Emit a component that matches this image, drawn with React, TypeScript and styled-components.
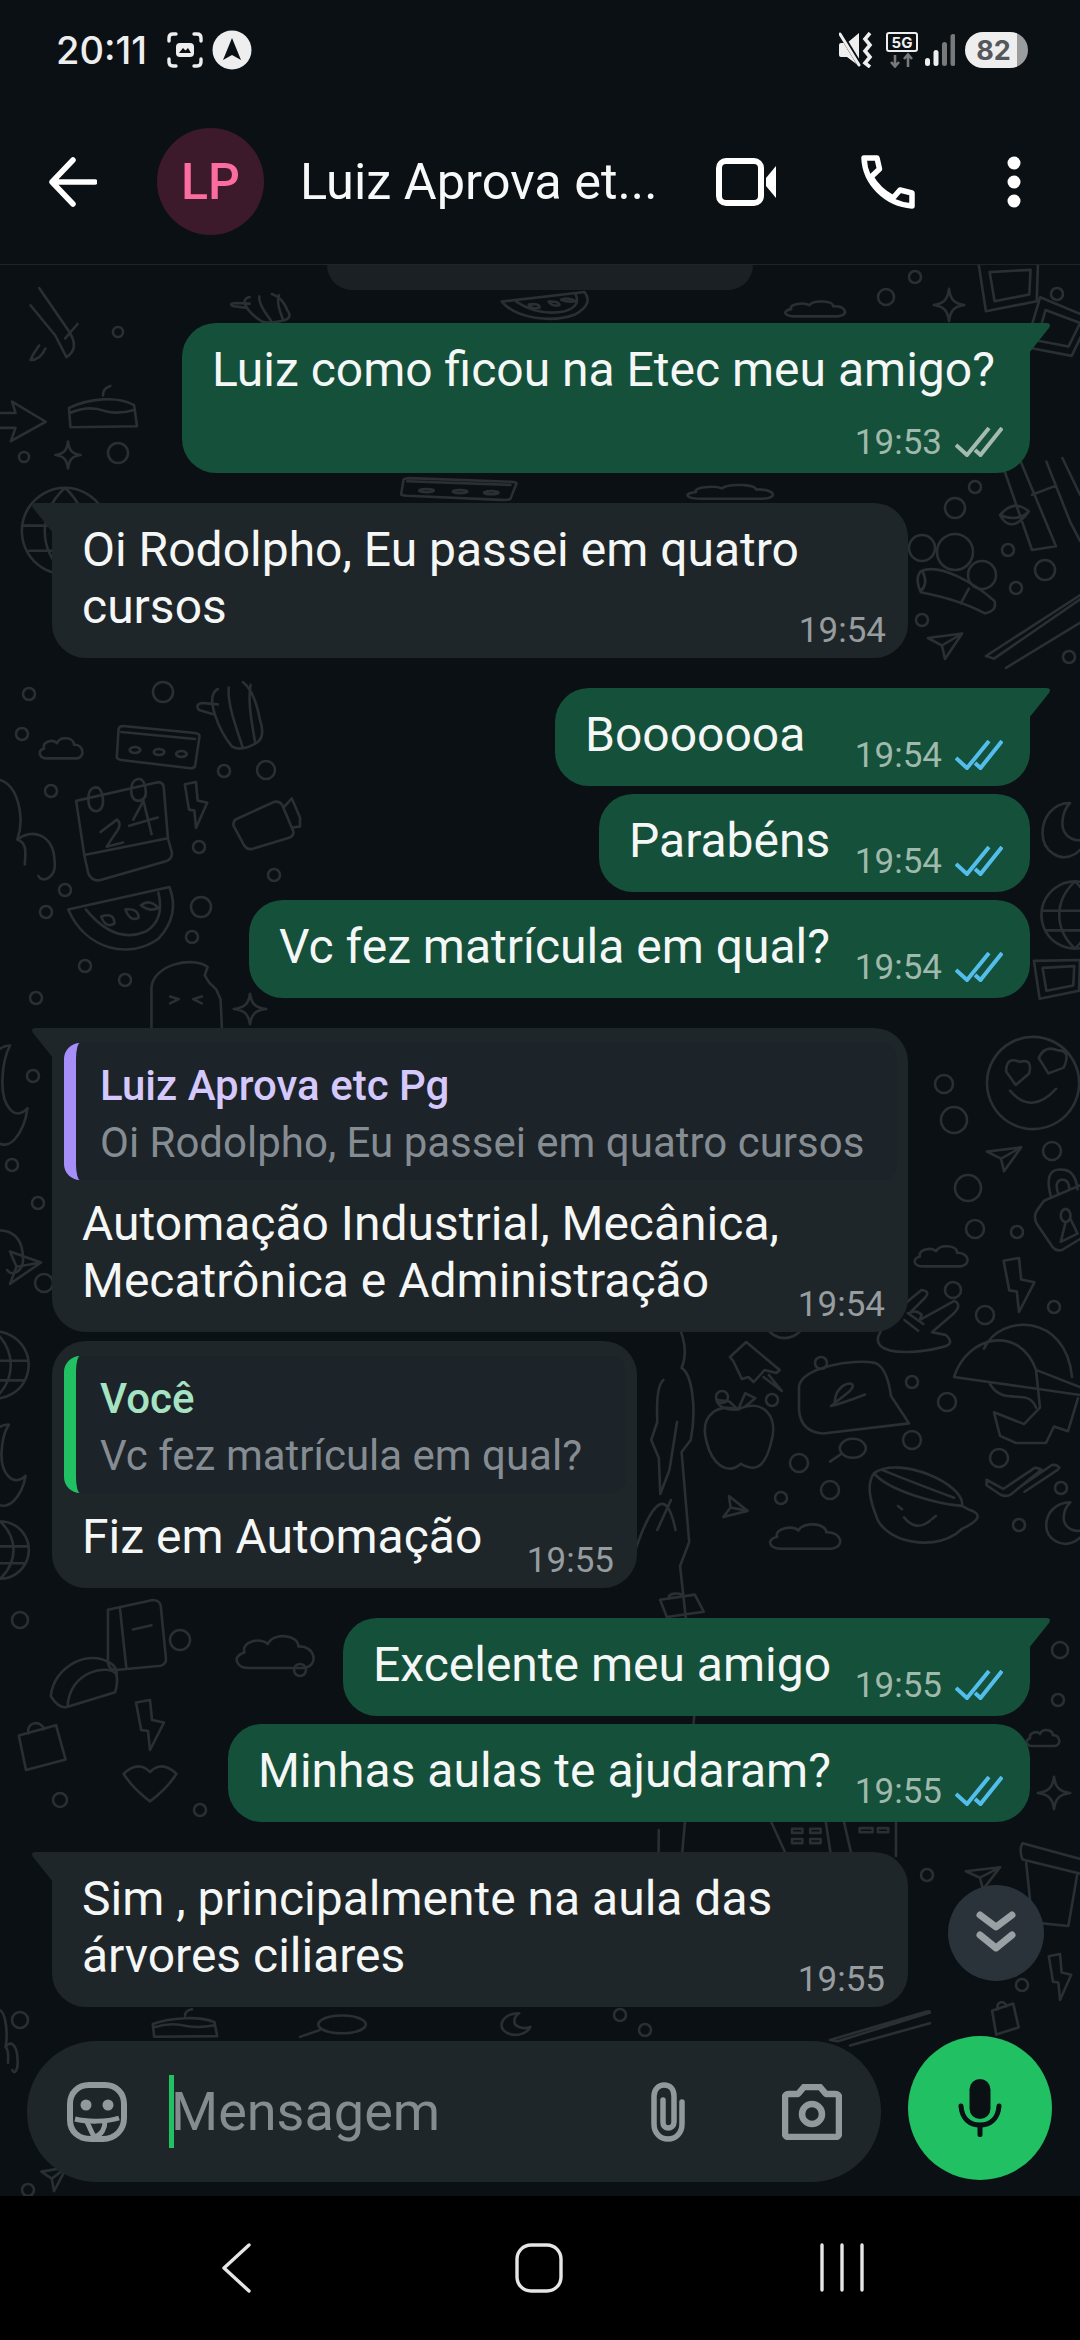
import React from 'react'
import styled, { createGlobalStyle, css } from 'styled-components'

const GlobalStyle = createGlobalStyle`
  html, body {
    margin: 0;
    background: #0b1014;
  }
  * {
    box-sizing: border-box;
  }
`

const Screen = styled.div`
  width: 1080px;
  height: 2340px;
  display: flex;
  flex-direction: column;
  overflow: hidden;
  background: #0b1014;
  font-family: Roboto, 'Liberation Sans', sans-serif;
  color: #fff;
`

const StatusBar = styled.div`
  height: 100px;
  flex: none;
  display: flex;
  align-items: center;
  justify-content: space-between;
  padding: 0 52px 0 56px;
`

const StatusGroup = styled.div`
  display: flex;
  align-items: center;
`

const Clock = styled.span`
  font-family: Inter, Roboto, sans-serif;
  font-size: 38px;
  font-weight: 500;
  color: #eeeeee;
  margin-right: 20px;
`

const BatteryPill = styled.div`
  width: 63px;
  height: 36px;
  margin-left: 10px;
  border-radius: 18px;
  display: flex;
  align-items: center;
  justify-content: center;
  padding-right: 6px;
  font-family: Inter, Roboto, sans-serif;
  font-size: 27px;
  font-weight: 700;
  color: #55585b;
  background: linear-gradient(90deg, #eeeeee 82%, #9a9c9e 82%);
`

const Header = styled.header`
  height: 165px;
  flex: none;
  display: flex;
  align-items: center;
  padding: 0 59px 1px 49px;
  border-bottom: 1px solid #1f2427;
`

const Avatar = styled.div`
  width: 107px;
  height: 107px;
  margin-left: 60px;
  border-radius: 50%;
  flex: none;
  display: flex;
  align-items: center;
  justify-content: center;
  background: #3d1a2b;
  color: #fb6c9f;
  font-size: 50px;
  font-weight: 500;
`

const ContactName = styled.div`
  flex: 1;
  margin-left: 36px;
  font-size: 50.5px;
  white-space: nowrap;
  color: #f7f8f8;
`

const HeaderIcon = styled.svg<{ $gap?: number }>`
  flex: none;
  display: block;
  margin-left: ${(p) => p.$gap ?? 0}px;
`

const Chat = styled.main`
  position: relative;
  flex: 1;
  min-height: 0;
  display: flex;
  flex-direction: column;
  overflow: hidden;
`

const Wallpaper = styled.svg`
  position: absolute;
  inset: 0;
  width: 100%;
  height: 100%;
  fill: none;
  stroke: #2a2f33;
  stroke-width: 2.6;
  stroke-linecap: round;
  stroke-linejoin: round;
`

const Messages = styled.div`
  position: relative;
  flex: 1;
  min-height: 0;
  display: flex;
  flex-direction: column;
  align-items: flex-start;
`

const CutBubble = styled.div`
  width: 426px;
  height: 25px;
  margin-left: 327px;
  border-radius: 0 0 34px 34px;
  background: #1a2023;
`

const tailOut = css`
  border-top-right-radius: 0;
  &::after {
    content: '';
    position: absolute;
    top: 0;
    right: -21px;
    width: 22px;
    height: 30px;
    background: inherit;
    clip-path: path('M0 0 H17 Q23 0 20 5 L0 30 Z');
  }
`

const tailIn = css`
  border-top-left-radius: 0;
  &::after {
    content: '';
    position: absolute;
    top: 0;
    left: -21px;
    width: 22px;
    height: 30px;
    background: inherit;
    clip-path: path('M22 0 H5 Q-1 0 2 5 L22 30 Z');
  }
`

const Bubble = styled.div<{ $out?: boolean; $tail?: boolean; $w: number; $gap: number }>`
  position: relative;
  width: ${(p) => p.$w}px;
  margin-top: ${(p) => p.$gap}px;
  margin-left: ${(p) => (p.$out ? 1030 - p.$w : 52)}px;
  border-radius: 34px;
  background: ${(p) => (p.$out ? '#15503a' : '#1f2629')};
  ${(p) => p.$tail && (p.$out ? tailOut : tailIn)}
`

const QuoteBox = styled.div<{ $accent: string }>`
  margin: 15px 11px 0 12px;
  height: 137px;
  padding: 14px 0 0 24px;
  border-left: 12px solid ${(p) => p.$accent};
  border-radius: 16px;
  background: #1c2329;
`

const QuoteTitle = styled.div<{ $color: string }>`
  font-size: 42px;
  line-height: 57px;
  font-weight: 500;
  color: ${(p) => p.$color};
`

const QuoteText = styled.div`
  font-size: 42px;
  line-height: 57px;
  white-space: nowrap;
  color: #858c92;
`

const Row = styled.div<{ $out?: boolean; $stack?: boolean; $quoted?: boolean }>`
  display: flex;
  flex-direction: ${(p) => (p.$stack ? 'column' : 'row')};
  justify-content: space-between;
  align-items: ${(p) => (p.$stack ? 'stretch' : 'flex-end')};
  padding: ${(p) => (p.$quoted ? 15 : 18)}px ${(p) => (p.$out ? 27 : 23)}px ${(p) => (p.$out ? 11 : 8)}px 30px;
`

const MessageText = styled.div<{ $out?: boolean; $stack?: boolean }>`
  font-size: 48px;
  line-height: 57px;
  white-space: nowrap;
  color: #f4f7f6;
  margin-bottom: ${(p) => (p.$stack ? 24 : p.$out ? 12 : 15)}px;
`

const Meta = styled.div<{ $out?: boolean }>`
  height: 40px;
  display: flex;
  align-items: center;
  justify-content: flex-end;
  gap: 13px;
  font-size: 35px;
  color: ${(p) => (p.$out ? '#9fb9ac' : '#979c9f')};
`

const ScrollButton = styled.div`
  position: absolute;
  right: 36px;
  bottom: 215px;
  width: 96px;
  height: 96px;
  border-radius: 50%;
  display: flex;
  align-items: center;
  justify-content: center;
  background: #2a3339;
`

const ComposerRow = styled.div`
  position: relative;
  height: 160px;
  flex: none;
  display: flex;
  align-items: flex-start;
  padding-left: 27px;
  gap: 27px;
`

const InputPill = styled.div`
  width: 854px;
  height: 141px;
  margin-top: 5px;
  border-radius: 70px;
  display: flex;
  align-items: center;
  padding-left: 40px;
  background: #1f2629;
`

const Caret = styled.div`
  width: 5px;
  height: 73px;
  margin-left: 42px;
  background: #21c063;
`

const Placeholder = styled.div`
  flex: 1;
  margin-left: -3px;
  font-size: 54px;
  color: #858c90;
`

const PillIcon = styled.svg<{ $right: number }>`
  flex: none;
  display: block;
  margin-right: ${(p) => p.$right}px;
  fill: none;
  stroke: #92999d;
`

const MicButton = styled.div`
  width: 144px;
  height: 144px;
  border-radius: 50%;
  flex: none;
  display: flex;
  align-items: center;
  justify-content: center;
  background: #21c063;
`

const NavBar = styled.nav`
  height: 144px;
  flex: none;
  display: flex;
  align-items: flex-start;
  padding: 47px 0 0 221px;
  background: #000;
`

const NavIcon = styled.svg<{ $gap?: number }>`
  display: block;
  margin-left: ${(p) => p.$gap ?? 0}px;
  fill: none;
  stroke: #e6e6e6;
  stroke-width: 3.4;
  stroke-linecap: round;
  stroke-linejoin: round;
`

// wallpaper doodles, each drawn in a 100x100 box
const shapes: Record<string, string> = {
  cloud: 'M22 80C6 80 2 60 16 54C12 36 34 28 42 40C48 20 76 24 76 44C94 42 100 76 82 80Z',
  sparkle: 'M50 5C54 35 65 46 95 50C65 54 54 65 50 95C46 65 35 54 5 50C35 46 46 35 50 5Z',
  plane: 'M5 20L95 5L50 90L42 45ZM42 45L95 5',
  bolt: 'M15 5L50 0L55 40L85 45L50 100L45 62L28 60Z',
  moon: 'M60 5C25 5 5 30 5 55C5 85 40 105 70 90C85 82 92 72 95 62C70 75 42 60 45 35C46 22 52 12 60 5Z',
  ticket: 'M8 8L92 22Q98 24 97 30L92 88Q90 94 84 92L6 76Q0 74 1 68L3 14Q4 8 8 8ZM6 20L92 34M22 50a6 6 0 1 0 .1 0M50 54a6 6 0 1 0 .1 0M76 58a6 6 0 1 0 .1 0',
  calendar: 'M6 22L86 4Q92 4 92 10L96 58L100 72Q100 78 94 80L30 98Q22 100 18 92L14 74ZM14 74L96 58M22 10Q30 6 32 18Q34 30 26 32Q18 32 18 20Q18 12 22 10ZM64 2Q72 -2 74 10Q76 20 68 22Q60 22 60 12Q60 4 64 2ZM30 52L46 40Q52 44 44 54L36 66L52 62M62 40L72 22L80 54M58 46L86 38',
  camera: 'M6 45L62 14Q70 12 74 20L90 66Q92 74 84 78L30 98Q22 100 18 92L2 56Q2 48 6 45ZM76 24L88 8L100 42L100 58L88 60',
  cactus: 'M28 10C10 20 30 70 46 92Q56 100 76 88Q90 80 82 54C78 30 72 10 60 0M42 8C40 30 50 60 60 94M70 4C66 30 72 60 76 88M22 46L4 40M4 40Q-2 32 8 30L28 32',
  melon: 'M2 32L94 0Q104 40 84 74C58 104 18 90 2 32ZM18 32Q44 82 72 64Q90 48 84 8M54 32Q66 30 66 44Q58 50 54 32ZM32 42Q44 36 44 52Q36 60 32 42ZM68 26Q76 16 84 30Q76 36 68 26Z',
  popsicle: 'M2 100L2 40C4 6 60 -6 80 10L76 22L82 32L92 42L98 56L100 100ZM28 62L40 56L28 52M72 62L60 56L72 52',
  broccoli: 'M0 0C30 6 40 40 28 62C50 50 86 56 88 84C92 102 68 108 62 100M28 62C46 66 40 80 40 88',
  smiley: 'M50 2A48 48 0 1 0 50.1 2ZM26 58Q48 84 74 56M22 38Q22 22 36 28Q50 24 46 40L32 52ZM56 24Q62 10 76 16Q90 16 82 34L66 40Z',
  lock: 'M20 40L90 18Q100 18 100 30L100 70Q100 78 90 82L50 100Q40 102 34 96L8 68Q2 60 8 52ZM32 36Q18 0 50 2Q72 2 76 26M44 32Q36 16 50 14Q62 14 62 26M56 50a8 8 0 1 0 .1 0M56 66L48 90L76 80L64 62',
  hand: 'M12 62C20 40 52 8 60 0Q72 2 62 14L46 34Q52 28 60 36L58 44L98 16Q108 22 96 36L72 62L88 66Q100 80 84 84C60 92 24 96 12 82Q6 74 12 62ZM40 44L56 60M44 34L62 50',
  pin: 'M30 0L92 56L86 62L64 56L44 80L34 70L22 74L6 38L0 30ZM62 70L96 98L72 66',
  speech: 'M6 36C10 10 60 -2 82 4Q94 10 98 50L116 88L30 102Q8 100 6 70ZM42 62C40 28 70 26 56 44L38 64Q50 60 72 48',
  apple: 'M50 24L60 4L74 10L60 20M50 24C80 10 108 28 96 64C86 100 70 98 54 90C36 104 14 92 6 62C-4 28 26 16 50 24ZM50 24L38 14L20 12Q24 24 46 24',
  cup: 'M4 16C30 -6 96 30 92 56L98 60Q120 68 92 84L86 90C60 110 20 100 8 74C0 50 -4 30 4 16ZM4 16C18 38 70 54 92 56M12 12Q40 26 84 46M32 60L28 56M62 72L66 68M34 70Q46 88 60 74',
  check: 'M2 56L24 76L62 34Q66 26 74 34L34 88Q28 94 20 88L2 68ZM52 82L96 34M44 74L88 24Q94 22 98 30',
  pot: 'M4 8L100 26Q104 34 98 42L4 26Q-2 16 4 8ZM10 30L20 96L78 100L92 44',
  taco: 'M4 70C8 24 60 -4 92 22Q100 30 98 38C90 20 30 30 28 86Q16 90 4 70ZM28 86L96 64Q100 50 98 38',
  notebook: 'M12 14L80 0Q90 0 92 8L100 84Q100 92 92 94L24 100Q14 100 12 90ZM30 10L40 98M50 42L78 36',
  chopstick: 'M0 100L96 6Q100 2 100 8L8 104ZM20 118L100 44',
  sushi: 'M6 10C30 -4 74 30 98 58Q102 74 86 78C60 60 30 50 6 44Q-2 22 6 10ZM8 10Q16 30 6 42M66 38L56 62',
  bamboo: 'M0 0L40 100M24 0L70 96L40 100M40 40L70 30M58 4L88 70L100 90M78 0L100 40M36 58Q18 44 0 62Q22 70 36 58ZM0 62Q14 84 36 58',
  frame: 'M4 2L100 0L98 70L16 88ZM22 18L88 14L86 58L30 70Z',
  buildings: 'M4 0L16 100M46 0L50 100M60 0L66 100M100 0L100 100M20 20h8v12h-8zM34 20h8v12h-8zM72 18h10v12h-10zM86 18h8v12h-8zM20 50h8v12h-8zM34 50h8v12h-8z',
  girl: 'M42 0C60 0 70 10 60 16C74 18 80 30 72 40L60 44L70 74L58 82L78 128L60 180L64 220M36 20Q26 22 28 34L20 40L30 46L32 58L44 50L54 34M28 70L46 60M0 76Q36 50 52 70M0 150Q40 170 70 138M30 170L28 220',
  cap: 'M4 44C18 8 70 0 86 38L134 54L136 60L4 44ZM34 20C50 -10 116 -10 122 44M86 38L90 70L74 84L44 74L50 94L66 100L96 100L104 86L118 90L128 62M40 50C54 70 78 52 86 70',
  rocket: 'M18 0L66 60Q84 84 62 96L44 66L4 24M60 70L80 50M18 80Q8 92 4 100Q20 100 28 84',
  arrow: 'M0 34L44 34L38 8L96 54L36 98L44 68L0 68',
  cake: 'M6 90L4 50C30 30 70 24 92 44L96 88ZM6 60Q30 44 52 56Q70 64 92 54M50 24Q50 8 60 4',
  globe: 'M50 2A48 48 0 1 0 50.1 2ZM50 2C20 30 20 70 50 98C80 70 80 30 50 2ZM4 44L96 44M10 72L90 72',
  bag: 'M18 30L80 10L96 76L30 96ZM34 26C30 2 56 0 60 18',
  mag: 'M60 6A34 34 0 1 0 60.1 6ZM28 62L0 88',
  rings: 'M6 30Q30 0 50 26Q70 0 94 30Q80 60 50 90Q20 60 6 30Z',
}

type Doodle = [string, number, number, number, number?, number?]

// [shape, x, y, width, height, rotation], page coordinates
const doodles: Doodle[] = [
  ['rocket', 28, 288, 62, 72],
  ['arrow', -10, 398, 58, 44],
  ['cake', 66, 384, 74, 48],
  ['sparkle', 54, 440, 28, 30],
  ['globe', 20, 486, 90, 90],
  ['sushi', 916, 565, 80, 62],
  ['frame', 976, 262, 62, 56],
  ['frame', 1024, 304, 56, 60, 24],
  ['sparkle', 932, 287, 34, 36],
  ['bamboo', 1000, 458, 80, 92],
  ['chopstick', 986, 590, 100, 66],
  ['plane', 926, 632, 38, 30],
  ['cactus', 196, 682, 78, 70],
  ['cloud', 36, 728, 50, 38],
  ['ticket', 116, 722, 86, 50],
  ['calendar', 70, 778, 102, 104],
  ['bolt', 180, 782, 32, 46],
  ['camera', 232, 794, 68, 56],
  ['broccoli', 0, 780, 62, 96],
  ['melon', 66, 887, 110, 70],
  ['popsicle', 150, 960, 72, 70],
  ['sparkle', 232, 992, 36, 34],
  ['cloud', 954, 740, 60, 44],
  ['frame', 1032, 960, 48, 44],
  ['moon', 1040, 800, 50, 60],
  ['globe', 1040, 880, 70, 70],
  ['smiley', 985, 1035, 96, 96],
  ['plane', 985, 1146, 38, 28],
  ['lock', 1032, 1168, 60, 82],
  ['cloud', 910, 1236, 62, 38],
  ['bolt', 997, 1258, 44, 54],
  ['hand', 870, 1290, 86, 68],
  ['moon', 764, 1300, 42, 40],
  ['pin', 730, 1342, 54, 50],
  ['speech', 793, 1360, 100, 72],
  ['cap', 950, 1325, 100, 118],
  ['apple', 702, 1390, 72, 82],
  ['girl', 636, 1320, 76, 300],
  ['mag', 830, 1437, 38, 28],
  ['cup', 870, 1460, 100, 82],
  ['check', 985, 1454, 76, 46],
  ['plane', 718, 1497, 26, 26, 48],
  ['cloud', 764, 1512, 82, 46],
  ['moon', 1044, 1500, 44, 46],
  ['moon', -20, 1040, 50, 110],
  ['broccoli', -30, 1180, 60, 90],
  ['plane', 0, 1250, 36, 40, 30],
  ['globe', -40, 1330, 70, 70],
  ['moon', -20, 1420, 48, 90],
  ['globe', -30, 1520, 60, 60],
  ['taco', 48, 1650, 70, 66],
  ['notebook', 100, 1600, 66, 70],
  ['cloud', 230, 1620, 90, 60],
  ['bolt', 130, 1700, 40, 50],
  ['bag', 8, 1720, 60, 52],
  ['rings', 120, 1760, 60, 46],
  ['cloud', 1024, 1722, 38, 30],
  ['sparkle', 1036, 1775, 36, 36],
  ['pot', 1020, 1836, 62, 90],
  ['plane', 964, 1866, 38, 26],
  ['buildings', 766, 1822, 130, 34],
  ['bolt', 1044, 1954, 32, 46],
  ['bag', 986, 2000, 34, 36],
  ['moon', 500, 2012, 32, 24],
  ['mag', 300, 2014, 70, 26],
  ['cake', 150, 2008, 70, 32],
  ['broccoli', 0, 2010, 20, 60],
  ['chopstick', 830, 2010, 100, 30],
  ['plane', 40, 2166, 28, 28],
  ['cloud', 680, 478, 100, 26],
  ['ticket', 400, 476, 120, 26],
  ['cactus', 230, 294, 70, 30],
  ['melon', 500, 292, 90, 30],
  ['cloud', 780, 294, 70, 28],
  ['bag', 650, 1592, 56, 26],
]

// [x, y, r]
const dots: [number, number, number][] = [
  [118, 332, 5], [24, 457, 5], [118, 453, 10], [975, 487, 6], [955, 508, 10], [922, 548, 13],
  [955, 552, 18], [982, 575, 14], [1008, 550, 6], [1045, 570, 10], [1016, 588, 6], [922, 620, 6],
  [1069, 657, 6], [915, 277, 6], [886, 297, 8], [1057, 294, 6], [29, 694, 6], [22, 734, 6],
  [163, 692, 10], [51, 791, 6], [224, 771, 6], [266, 770, 9], [65, 890, 6], [46, 912, 6],
  [199, 847, 6], [274, 875, 6], [201, 907, 10], [192, 937, 6], [85, 966, 6], [125, 980, 6],
  [36, 998, 6], [33, 1076, 6], [12, 1165, 6], [38, 1203, 6], [44, 1283, 9], [944, 1084, 9],
  [954, 1120, 13], [1052, 1151, 9], [968, 1188, 13], [975, 1229, 9], [1017, 1232, 6], [953, 1290, 8],
  [985, 1315, 9], [1054, 1307, 6], [845, 1318, 9], [821, 1363, 6], [912, 1382, 6], [947, 1402, 9],
  [772, 1400, 6], [722, 1397, 6], [912, 1440, 9], [999, 1458, 9], [799, 1463, 9], [830, 1490, 9],
  [781, 1498, 6], [1061, 1488, 6], [1019, 1525, 6], [927, 1875, 6], [1022, 1985, 6], [1060, 1650, 8],
  [1058, 1700, 6], [20, 1620, 8], [180, 1640, 10], [300, 1670, 6], [60, 1800, 7], [200, 1810, 6],
  [20, 2020, 8], [620, 2015, 6], [645, 2030, 6], [28, 2190, 6],
]

const ChatWallpaper = () => (
  <Wallpaper viewBox="0 265 1080 1931">
    {doodles.map(([name, x, y, w, h = w, rot = 0], i) => (
      <path
        key={i}
        d={shapes[name]}
        vectorEffect="non-scaling-stroke"
        transform={`translate(${x} ${y}) rotate(${rot} ${w / 2} ${h / 2}) scale(${w / 100} ${h / 100})`}
      />
    ))}
    {dots.map(([cx, cy, r], i) => (
      <circle key={i} cx={cx} cy={cy} r={r} />
    ))}
  </Wallpaper>
)

const Ticks = ({ read }: { read?: boolean }) => (
  <svg width="48" height="30" viewBox="0 0 48 30" fill="none" stroke={read ? '#53bdeb' : '#a4bbaf'} strokeWidth="4">
    <path d="M1 18L12 28L34 1" />
    <path d="M20 23L25.5 28L47 1" />
  </svg>
)

type QuoteData = { accent: string; titleColor: string; title: string; text: string }

type MessageProps = {
  out?: boolean
  tail?: boolean
  read?: boolean
  stack?: boolean
  w: number
  gap: number
  time: string
  quote?: QuoteData
  children: React.ReactNode
}

const Message = ({ out, tail, read, stack, w, gap, time, quote, children }: MessageProps) => (
  <Bubble $out={out} $tail={tail} $w={w} $gap={gap}>
    {quote && (
      <QuoteBox $accent={quote.accent}>
        <QuoteTitle $color={quote.titleColor}>{quote.title}</QuoteTitle>
        <QuoteText>{quote.text}</QuoteText>
      </QuoteBox>
    )}
    <Row $out={out} $stack={stack} $quoted={!!quote}>
      <MessageText $out={out} $stack={stack}>{children}</MessageText>
      <Meta $out={out}>
        {time}
        {out && <Ticks read={read} />}
      </Meta>
    </Row>
  </Bubble>
)

const App = () => (
  <Screen>
    <GlobalStyle />
    <StatusBar>
      <StatusGroup>
        <Clock>20:11</Clock>
        <svg width="36" height="36" viewBox="0 0 36 36" fill="none" stroke="#eee" strokeWidth="3.4" strokeLinecap="round">
          <path d="M2 9V6Q2 2 6 2H9M27 2H30Q34 2 34 6V9M34 27V30Q34 34 30 34H27M9 34H6Q2 34 2 30V27" />
          <rect x="9" y="11" width="18" height="14" rx="4" fill="#eee" stroke="none" />
          <path d="M12 21L16 16L18.500 18.500L21 16L24 21Z" fill="#0b1014" stroke="none" />
        </svg>
        <svg width="40" height="40" viewBox="0 0 40 40" style={{ marginLeft: 9 }}>
          <circle cx="20" cy="20" r="19.500" fill="#eee" />
          <path d="M20 8L29 30L20 25L11 30Z" fill="#0b1014" />
        </svg>
      </StatusGroup>
      <StatusGroup>
        <svg width="35" height="36" viewBox="0 0 35 36">
          <path d="M0 13Q0 11 2 11H8L20 1V34L8 25H2Q0 25 0 23Z" fill="#eee" />
          <path d="M2 2L21 33" stroke="#0b1014" strokeWidth="5" />
          <path d="M1 2L20 33" stroke="#eee" strokeWidth="3" strokeLinecap="round" />
          <path d="M31 1L26 7L31 13L26 19L31 25L26 31L31 35" fill="none" stroke="#eee" strokeWidth="3.6" />
        </svg>
        <svg width="32" height="36" viewBox="0 0 32 36" style={{ marginLeft: 12 }}>
          <rect x="1" y="1" width="30" height="18" rx="2" fill="none" stroke="#eee" strokeWidth="2" />
          <text x="16" y="16" textAnchor="middle" fontFamily="Inter, sans-serif" fontSize="15" fontWeight="700" fill="#eee">5G</text>
          <path d="M9 23V34M5 30L9 34.500L13 30M22 35V23M18 27L22 22.500L26 27" fill="none" stroke="#77797b" strokeWidth="2.6" />
        </svg>
        <svg width="30" height="34" viewBox="0 0 30 34" style={{ marginLeft: 7 }}>
          <rect x="0" y="25" width="5" height="8" rx="2.500" fill="#eee" />
          <rect x="8.500" y="17" width="5" height="16" rx="2.500" fill="#eee" />
          <rect x="17" y="9" width="5" height="24" rx="2.500" fill="#77797b" />
          <rect x="25.500" y="1" width="5" height="32" rx="2.500" fill="#77797b" />
        </svg>
        <BatteryPill>82</BatteryPill>
      </StatusGroup>
    </StatusBar>

    <Header>
      <HeaderIcon width="48" height="50" viewBox="0 0 48 50" fill="none" stroke="#fff" strokeWidth="5.500" strokeLinecap="round" strokeLinejoin="round">
        <path d="M46 25H5M24 3L3 25L24 47" />
      </HeaderIcon>
      <Avatar>LP</Avatar>
      <ContactName>Luiz Aprova et...</ContactName>
      <HeaderIcon width="60" height="48" viewBox="0 0 60 48">
        <rect x="3" y="3" width="42" height="42" rx="7" fill="none" stroke="#fff" strokeWidth="6" />
        <path d="M50 20L60 8V40L50 28Z" fill="#fff" />
      </HeaderIcon>
      <HeaderIcon $gap={84} width="56" height="56" viewBox="20 24 56 56" fill="none" stroke="#fff" strokeWidth="5.500" strokeLinejoin="round">
        <path d="M24 28L37 28L39.500 39L31 47C36 56 44 63 53 68L60 60L72 63L72 76C46 74 25 53 24 28Z" />
      </HeaderIcon>
      <HeaderIcon $gap={91} width="14" height="52" viewBox="0 0 14 52" fill="#fff">
        <circle cx="7" cy="7" r="6.500" />
        <circle cx="7" cy="26" r="6.500" />
        <circle cx="7" cy="45" r="6.500" />
      </HeaderIcon>
    </Header>

    <Chat>
      <ChatWallpaper />
      <Messages>
        <CutBubble />
        <Message out tail stack w={848} gap={33} time="19:53">
          Luiz como ficou na Etec meu amigo?
        </Message>
        <Message tail w={856} gap={30} time="19:54">
          Oi Rodolpho, Eu passei em quatro
          <br />
          cursos
        </Message>
        <Message out tail read w={475} gap={30} time="19:54">
          Booooooa
        </Message>
        <Message out read w={431} gap={8} time="19:54">
          Parabéns
        </Message>
        <Message out read w={781} gap={8} time="19:54">
          Vc fez matrícula em qual?
        </Message>
        <Message
          tail
          w={856}
          gap={30}
          time="19:54"
          quote={{ accent: '#a78ffa', titleColor: '#d4c8fc', title: 'Luiz Aprova etc Pg', text: 'Oi Rodolpho, Eu passei em quatro cursos' }}
        >
          Automação Industrial, Mecânica,
          <br />
          Mecatrônica e Administração
        </Message>
        <Message
          w={585}
          gap={9}
          time="19:55"
          quote={{ accent: '#21c063', titleColor: '#a5e3c3', title: 'Você', text: 'Vc fez matrícula em qual?' }}
        >
          Fiz em Automação
        </Message>
        <Message out tail read w={687} gap={30} time="19:55">
          Excelente meu amigo
        </Message>
        <Message out read w={802} gap={8} time="19:55">
          Minhas aulas te ajudaram?
        </Message>
        <Message tail w={856} gap={30} time="19:55">
          Sim , principalmente na aula das
          <br />
          árvores ciliares
        </Message>
      </Messages>

      <ScrollButton>
        <svg width="40" height="44" viewBox="0 0 40 44" fill="none" stroke="#9aa1a5" strokeWidth="7" strokeLinecap="round" strokeLinejoin="round">
          <path d="M4 4L20 16L36 4M4 24L20 37L36 24" />
        </svg>
      </ScrollButton>

      <ComposerRow>
        <InputPill>
          <PillIcon $right={0} width="60" height="60" viewBox="0 0 60 60" strokeWidth="6">
            <path d="M22 3H38C49 3 57 11 57 22V36C57 48 48 57 36 57H24C11 57 3 49 3 38V22C3 11 11 3 22 3Z" />
            <circle cx="19" cy="23" r="5.500" fill="#92999d" stroke="none" />
            <circle cx="41" cy="23" r="5.500" fill="#92999d" stroke="none" />
            <path d="M8 37C20 40 40 40 52 36" strokeWidth="5" />
            <path d="M20 40L27 55C35 53 38 46 38 39" strokeWidth="5" strokeLinejoin="round" />
          </PillIcon>
          <Caret />
          <Placeholder>Mensagem</Placeholder>
          <PillIcon $right={95} width="38" height="60" viewBox="0 0 38 60" strokeWidth="5.500" strokeLinecap="round">
            <path d="M33 20V42C33 51 27 57 19 57C11 57 5 51 5 42V14C5 7 10 3 15 3C21 3 25 7 25 14V40C25 44 22 46 19 46C16 46 14 44 14 40V18" />
          </PillIcon>
          <PillIcon $right={39} width="60" height="56" viewBox="0 0 60 56" strokeWidth="6.500" strokeLinejoin="round">
            <path d="M3 13C3 11 5 10 7 10H16L22 3H38L44 10H53C55 10 57 11 57 13V50C57 52 55 53 53 53H7C5 53 3 52 3 50Z" />
            <circle cx="30" cy="30" r="10" />
          </PillIcon>
        </InputPill>
        <MicButton>
          <svg width="44" height="58" viewBox="0 0 44 58" fill="#0b1014">
            <rect x="11.500" y="0" width="21" height="40" rx="10.500" />
            <path d="M3 27C4 40 12 46 22 46C32 46 40 40 41 27" fill="none" stroke="#0b1014" strokeWidth="5" strokeLinecap="round" />
            <rect x="19.500" y="44" width="5" height="14" rx="2" />
          </svg>
        </MicButton>
      </ComposerRow>
    </Chat>

    <NavBar>
      <NavIcon width="30" height="50" viewBox="0 0 30 50">
        <path d="M28 2L3 25L28 48" />
      </NavIcon>
      <NavIcon $gap={264} width="48" height="50" viewBox="0 0 48 50" strokeWidth="4">
        <rect x="2" y="2" width="44" height="46" rx="14" />
      </NavIcon>
      <NavIcon $gap={256} width="46" height="50" viewBox="0 0 46 50" strokeWidth="3.400">
        <path d="M3 2V47M23 2V47M43 2V47" />
      </NavIcon>
    </NavBar>
  </Screen>
)

export default App
